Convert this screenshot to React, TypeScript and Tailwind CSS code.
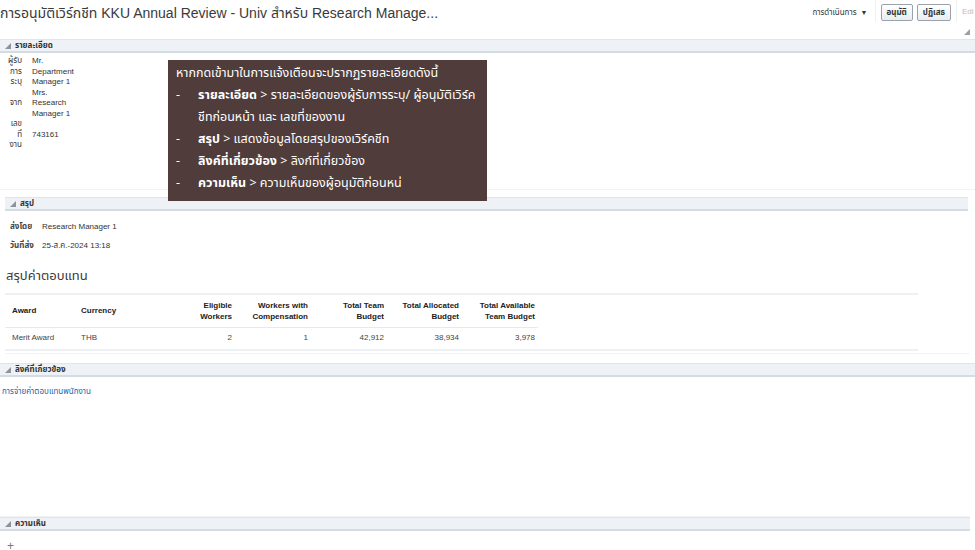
import React from "react";

function Tri() {
  return (
    <svg width="6" height="6" viewBox="0 0 6 6" className="mr-[4px] shrink-0">
      <polygon points="6,0 6,6 0,6" fill="#8b939c" />
    </svg>
  );
}

function SectionHeader({ title, className = "" }: { title: string; className?: string }) {
  return (
    <div
      className={`flex items-center h-[14px] pl-[5px] bg-[#eef1f5] border-t border-[#e1e5ea] border-b-2 border-b-[#d5dbe2] ${className}`}
    >
      <Tri />
      <span className="text-[8px] font-bold text-[#333] leading-none">{title}</span>
    </div>
  );
}

const tips: [string, string[]][] = [
  ["รายละเอียด", ["รายละเอียดของผู้รับการระบุ/ ผู้อนุมัติเวิร์ค", "ชีทก่อนหน้า และ เลขที่ของงาน"]],
  ["สรุป", ["แสดงข้อมูลโดยสรุปของเวิร์คชีท"]],
  ["ลิงค์ที่เกี่ยวข้อง", ["ลิงก์ที่เกี่ยวข้อง"]],
  ["ความเห็น", ["ความเห็นของผู้อนุมัติก่อนหน่"]],
];

const cols = [
  { label: ["Award"], w: "w-[76px]", align: "text-left pl-[7px]" },
  { label: ["Currency"], w: "w-[78px]", align: "text-left" },
  { label: ["Eligible", "Workers"], w: "w-[76px]", align: "text-right pr-[3px]" },
  { label: ["Workers with", "Compensation"], w: "w-[76px]", align: "text-right pr-[3px]" },
  { label: ["Total Team", "Budget"], w: "w-[76px]", align: "text-right pr-[3px]" },
  { label: ["Total Allocated", "Budget"], w: "w-[75px]", align: "text-right pr-[3px]" },
  { label: ["Total Available", "Team Budget"], w: "w-[76px]", align: "text-right pr-[3px]" },
];

const row = ["Merit Award", "THB", "2", "1", "42,912", "38,934", "3,978"];

export default function App() {
  return (
    <div className="relative w-[975px] h-[550px] overflow-hidden bg-white text-[#333] font-['Liberation_Sans','Noto_Sans','Noto_Sans_Thai',sans-serif]">
      {/* page header */}
      <div className="flex h-[39px]">
        <div className="flex-1 pt-[4px] text-[14px] leading-[19px] text-[#3a3a3a] whitespace-nowrap">
          การอนุมัติเวิร์กชีท KKU Annual Review - Univ สำหรับ Research Manage...
        </div>
        <div className="flex items-start">
          <div className="pt-[7px] pr-[7px] text-[8px] text-[#333] flex items-center">
            การดำเนินการ <span className="ml-[4px] text-[7px]">▼</span>
          </div>
          <div className="flex gap-[4px] pl-[5px] pr-[5px] pt-[4px] h-[22px] border-l border-r border-[#eef0f2]">
            <button className="h-[17px] px-[5px] text-[8px] font-bold text-[#333] border border-[#9aa3ad] rounded-[2px] bg-gradient-to-b from-white to-[#e9edf1]">
              อนุมัติ
            </button>
            <button className="h-[17px] px-[5px] text-[8px] font-bold text-[#333] border border-[#9aa3ad] rounded-[2px] bg-gradient-to-b from-white to-[#e9edf1]">
              ปฏิเสธ
            </button>
          </div>
          <div className="w-[18px] pl-[5px]">
            <div className="pt-[8px] text-[8px] text-[#b8bcc0] leading-none">Edi</div>
            <svg width="6" height="6" viewBox="0 0 6 6" className="mt-[13px] ml-[2px]">
              <polygon points="6,0 6,6 0,6" fill="#9aa0a6" />
            </svg>
          </div>
        </div>
      </div>

      {/* details */}
      <SectionHeader title="รายละเอียด" />
      <div className="h-[137px] pt-[3px] border-b border-[#f1f3f5]">
        <div className="grid grid-cols-[22px_1fr] gap-x-[10px] items-center text-[8px] leading-[10.5px] text-[#333]">
          <div className="text-right">ผู้รับ<br />การ<br />ระบุ</div>
          <div>Mr.<br />Department<br />Manager 1</div>
          <div className="text-right">จาก</div>
          <div>Mrs.<br />Research<br />Manager 1</div>
          <div className="text-right">เลข<br />ที่<br />งาน</div>
          <div>743161</div>
        </div>
      </div>

      {/* summary */}
      <div className="pl-[5px] pr-[7px] mt-[7px]">
        <SectionHeader title="สรุป" />
        <div className="pt-[6px] pl-[5px] text-[8px] leading-[19px]">
          <div className="flex"><span className="w-[32px] font-bold text-[#444]">ส่งโดย</span><span>Research Manager 1</span></div>
          <div className="flex"><span className="w-[32px] font-bold text-[#444]">วันที่ส่ง</span><span>25-ส.ค.-2024 13:18</span></div>
        </div>
      </div>
      <div className="pl-[6px] pt-[12px] text-[13px] leading-[18px] text-[#3a3a3a]">สรุปค่าตอบแทน</div>

      <div className="ml-[5px] mt-[8px] w-[913px] border-t-2 border-b-2 border-[#eef1f4]">
        <table className="border-collapse text-[8px]">
          <thead>
            <tr className="h-[32px] border-b border-[#e6eaee]">
              {cols.map((c) => (
                <th key={c.label.join()} className={`${c.w} ${c.align} font-bold leading-[11px] align-middle text-[#222]`}>
                  {c.label.map((l) => (
                    <div key={l}>{l}</div>
                  ))}
                </th>
              ))}
            </tr>
          </thead>
          <tbody>
            <tr className="h-[22px]">
              {row.map((v, i) => (
                <td key={i} className={`${cols[i].align} text-[#444]`}>{v}</td>
              ))}
            </tr>
          </tbody>
        </table>
      </div>
      <div className="ml-[5px] mt-[2px] w-[965px] border-t border-[#f1f3f5]" />

      {/* related links */}
      <SectionHeader title="ลิงค์ที่เกี่ยวข้อง" className="mt-[9px]" />
      <div className="h-[139px] pt-[9px] pl-[2px] text-[8px] text-[#1f5fa9]">การจ่ายค่าตอบแทนพนักงาน</div>

      {/* comments */}
      <div className="border-t border-[#f1f3f5] w-[970px]" />
      <SectionHeader title="ความเห็น" className="w-[970px]" />
      <div className="pl-[7px] pt-[9px] text-[12px] text-[#777] leading-none">+</div>

      {/* annotation box */}
      <div className="absolute left-[168px] top-[60px] w-[319px] h-[141px] bg-[#4f3c3b] text-white text-[12.5px] leading-[22px] pl-[8px] pt-[3px] font-['Noto_Sans_Thai','Noto_Sans','Liberation_Sans',sans-serif]">
        <div>หากกดเข้ามาในการแจ้งเตือนจะปรากฏรายละเอียดดังนี้</div>
        {tips.map(([b, lines]) => (
          <div key={b} className="flex">
            <span className="w-[22px] shrink-0">-</span>
            <div>
              <div>
                <b>{b}</b> &gt; {lines[0]}
              </div>
              {lines.slice(1).map((l) => (
                <div key={l}>{l}</div>
              ))}
            </div>
          </div>
        ))}
      </div>
    </div>
  );
}
